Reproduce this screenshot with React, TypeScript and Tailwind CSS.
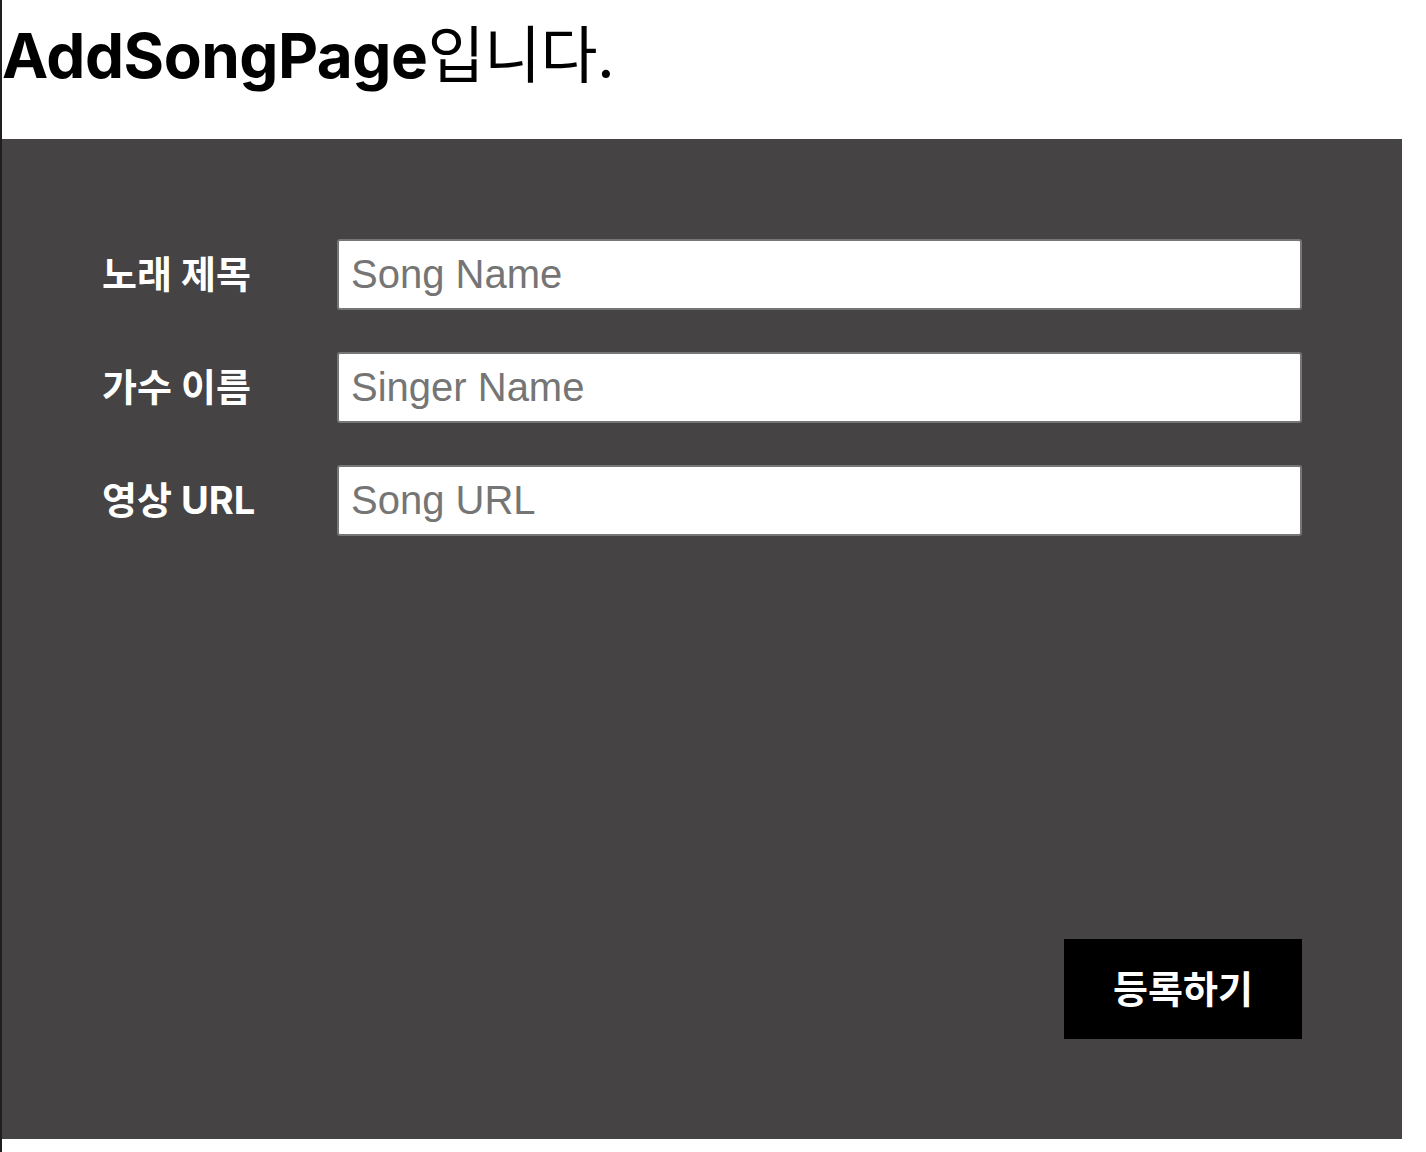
export default function App() {
  const fields = [
    { label: "노래 제목", placeholder: "Song Name" },
    { label: "가수 이름", placeholder: "Singer Name" },
    { label: "영상 URL", placeholder: "Song URL" },
  ];

  return (
    <div className="min-h-screen border-l-2 border-[#1f1f1f] bg-white font-['Inter','Noto_Sans_CJK_KR',sans-serif]">
      <div className="h-[139px] pt-[18px]">
        <h1 className="text-[62px] font-bold leading-[75px] tracking-[-0.5px] text-black">
          AddSongPage<span className="font-normal">입니다.</span>
        </h1>
      </div>

      <div className="flex h-[1000px] w-[1400px] flex-col bg-[#454343] px-[100px] pb-[100px] pt-[100px]">
        <div className="flex flex-col gap-[42px]">
          {fields.map((f) => (
            <div key={f.label} className="flex items-center">
              <label className="w-[235px] text-[38px] font-bold text-white">{f.label}</label>
              <input
                type="text"
                placeholder={f.placeholder}
                className="h-[71px] flex-1 rounded-[3px] border-2 border-[#767676] bg-white px-3 font-['Liberation_Sans',sans-serif] text-[40px] text-black placeholder:text-[#757575] outline-none"
              />
            </div>
          ))}
        </div>

        <button className="mt-auto h-[100px] w-[238px] self-end bg-black text-[38px] font-bold text-white">
          등록하기
        </button>
      </div>
    </div>
  );
}
